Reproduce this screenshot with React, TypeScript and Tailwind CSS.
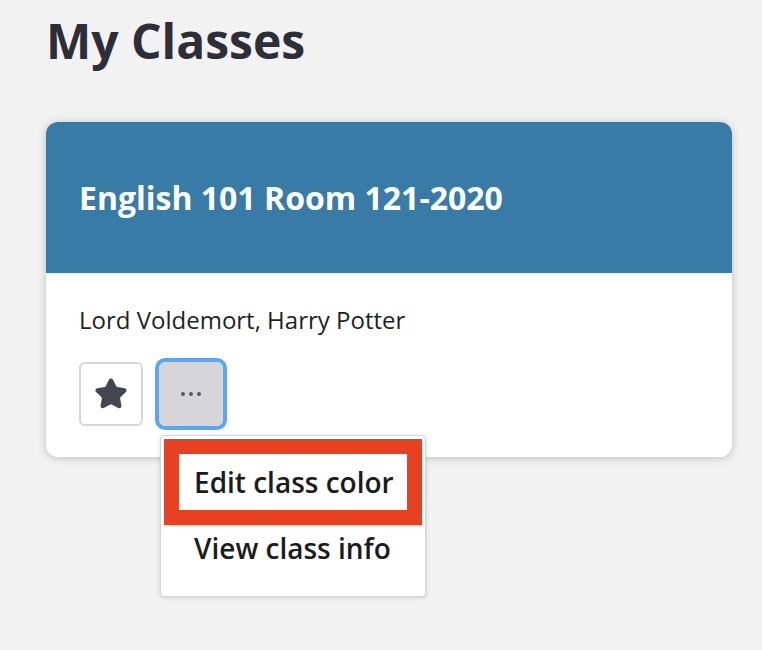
import * as React from "react";

function StarIcon() {
  return (
    <svg width="34" height="34" viewBox="0 0 24 24" fill="#464650" stroke="#464650" strokeWidth="2" strokeLinejoin="round" strokeLinecap="round">
      <path d="M11.525 2.295a.53.53 0 0 1 .95 0l2.31 4.679a2.123 2.123 0 0 0 1.595 1.16l5.166.756a.53.53 0 0 1 .294.904l-3.736 3.638a2.123 2.123 0 0 0-.611 1.878l.882 5.14a.53.53 0 0 1-.771.56l-4.618-2.428a2.122 2.122 0 0 0-1.973 0L6.396 21.01a.53.53 0 0 1-.77-.56l.881-5.139a2.122 2.122 0 0 0-.611-1.879L2.16 9.795a.53.53 0 0 1 .294-.906l5.165-.755a2.122 2.122 0 0 0 1.597-1.16z" />
    </svg>
  );
}

export default function App() {
  return (
    <div className="min-h-[650px] bg-[#f2f2f2] pl-[46px] pr-[30px] font-['Open_Sans',sans-serif]">
      <h1 className="pt-[12px] text-[48px] font-bold leading-[58px] text-[#2e2e38]">My Classes</h1>

      <div className="mt-[52px] w-[686px] rounded-[12px] bg-white shadow-[0_1px_8px_rgba(0,0,0,0.22)]">
        {/* card header */}
        <div className="flex h-[151px] items-center rounded-t-[12px] bg-[#387ba7] px-[33px]">
          <h2 className="text-[32px] font-bold leading-[40px] text-white">English 101 Room 121-2020</h2>
        </div>

        {/* card body */}
        <div className="px-[33px] pb-[31px] pt-[31px]">
          <p className="text-[24px] leading-[32px] text-[#1f1f24]">Lord Voldemort, Harry Potter</p>

          <div className="mt-[26px] flex gap-[16px]">
            <button className="flex h-[64px] w-[64px] items-center justify-center rounded-[6px] border-2 border-[#d6d6d6] bg-white">
              <StarIcon />
            </button>

            <div className="relative">
              <button className="flex h-[64px] w-[64px] items-center justify-center gap-[4px] rounded-[6px] bg-[#d6d6d9] outline-4 outline-[#5ca5f5]">
                <span className="h-[4px] w-[4px] rounded-full bg-[#55555f]" />
                <span className="h-[4px] w-[4px] rounded-full bg-[#55555f]" />
                <span className="h-[4px] w-[4px] rounded-full bg-[#55555f]" />
              </button>

              {/* dropdown menu */}
              <div className="absolute left-px top-[73px] z-10 h-[162px] w-[266px] rounded-[4px] border border-[#d4d4d4] bg-white p-[3px] shadow-[0_1px_4px_rgba(0,0,0,0.15)]">
                <div className="border-[15px] border-[#e84122]">
                  <div className="py-[10px] pl-[15px] text-[28px] font-semibold leading-[36px] text-[#1b1b20]">Edit class color</div>
                </div>
                <div className="pl-[30px] pt-[5px] text-[28px] font-semibold leading-[36px] text-[#1b1b20]">View class info</div>
              </div>
            </div>
          </div>
        </div>
      </div>
    </div>
  );
}
